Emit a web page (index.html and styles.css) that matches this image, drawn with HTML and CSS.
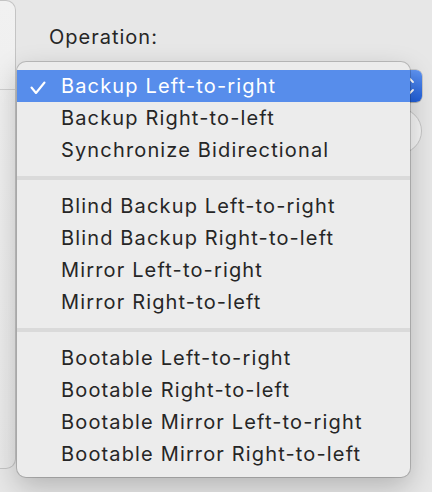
FILE: index.html
```html
<!DOCTYPE html>
<html>
<head>
<meta charset="utf-8">
<link rel="stylesheet" href="styles.css">
</head>
<body>
<div class="window">
  <div class="sidebar">
    <div class="sidebar-head"></div>
  </div>
  <div class="content">
    <div class="label">Operation:</div>
    <div class="popup">
      <div class="popup-body"></div>
      <div class="popup-arrows">
        <svg width="18" height="32" viewBox="0 0 18 32"><polyline points="3,12 7,8 11,12" fill="none" stroke="#fff" stroke-width="1.8" stroke-linecap="round" stroke-linejoin="round"/><polyline points="3,20 7,24 11,20" fill="none" stroke="#fff" stroke-width="1.8" stroke-linecap="round" stroke-linejoin="round"/></svg>
      </div>
    </div>
    <div class="round-row">
      <div class="round-btn"></div>
    </div>
  </div>
</div>

<div class="menu">
  <div class="item selected">
    <svg class="check" width="16" height="14" viewBox="0 0 16 14"><polyline points="1.5,6.5 6,12 14.5,1.5" fill="none" stroke="#fff" stroke-width="2.1" stroke-linecap="round" stroke-linejoin="round"/></svg>
    Backup Left-to-right
  </div>
  <div class="item">Backup Right-to-left</div>
  <div class="item">Synchronize Bidirectional</div>
  <div class="sep"></div>
  <div class="item">Blind Backup Left-to-right</div>
  <div class="item">Blind Backup Right-to-left</div>
  <div class="item">Mirror Left-to-right</div>
  <div class="item">Mirror Right-to-left</div>
  <div class="sep"></div>
  <div class="item">Bootable Left-to-right</div>
  <div class="item">Bootable Right-to-left</div>
  <div class="item">Bootable Mirror Left-to-right</div>
  <div class="item">Bootable Mirror Right-to-left</div>
</div>
</body>
</html>
```

FILE: styles.css
```css
html, body {
  margin: 0;
  padding: 0;
}
body {
  width: 432px;
  height: 492px;
  overflow: hidden;
  background: #e7e7e7;
  font-family: Inter, "Liberation Sans", sans-serif;
  color: #262626;
  position: relative;
}
.window {
  display: flex;
  height: 492px;
}
.sidebar {
  width: 16px;
  height: 469px;
  box-sizing: border-box;
  background: linear-gradient(#f1f1f1, #e9e9e9);
  border: 1px solid #c4c4c4;
  border-left: none;
  border-radius: 0 10px 10px 0;
  flex: none;
}
.sidebar-head {
  height: 88px;
  border-bottom: 1px solid #cfcfcf;
}
.content {
  flex: 1;
  padding: 25px 10px 0 32px;
  display: flex;
  flex-direction: column;
}
.label {
  font-size: 20px;
  letter-spacing: 1px;
  line-height: 24px;
  height: 24px;
  margin-left: 1px;
}
.popup {
  margin-top: 21px;
  height: 32px;
  display: flex;
  border-radius: 6px;
  background: #fdfdfd;
  box-shadow: 0 0 0 0.5px rgba(0,0,0,0.25), 0 1px 1px rgba(0,0,0,0.15);
}
.popup-body {
  flex: 1;
}
.popup-arrows {
  width: 20px;
  border-radius: 0 6px 6px 0;
  background: linear-gradient(#5f94f2, #1f5ed9);
  display: flex;
  justify-content: flex-start;
}
.round-row {
  margin-top: 6px;
  display: flex;
  justify-content: flex-end;
}
.round-btn {
  width: 46px;
  height: 46px;
  box-sizing: border-box;
  border-radius: 50%;
  background: #f4f4f4;
  border: 1px solid #c6c6c6;
}
.menu {
  position: absolute;
  left: 17px;
  top: 62px;
  width: 393px;
  box-sizing: border-box;
  padding: 8px 0 7px;
  background: #ececec;
  border-radius: 9px;
  box-shadow: 0 0 0 1px rgba(0,0,0,0.18), 0 10px 28px rgba(0,0,0,0.22);
  font-size: 20px;
  letter-spacing: 1.15px;
}
.item {
  height: 32px;
  line-height: 32px;
  padding-left: 44px;
  position: relative;
  white-space: nowrap;
}
.item.selected {
  background: #578deb;
  color: #fff;
}
.check {
  position: absolute;
  left: 13px;
  top: 11px;
}
.sep {
  height: 4px;
  margin: 10px 0;
  background: #dadada;
}
```
